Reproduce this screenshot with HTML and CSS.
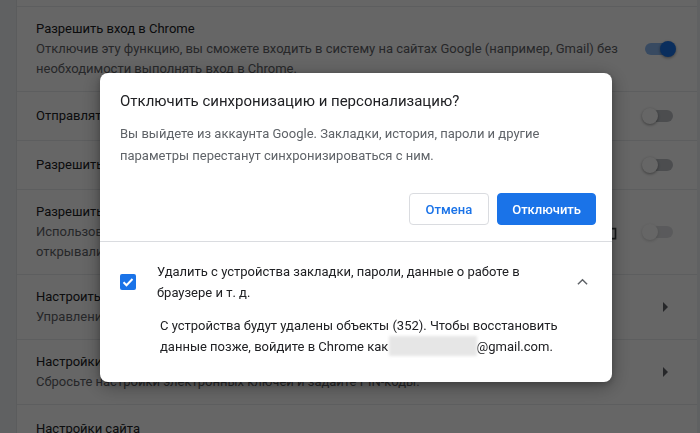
FILE: index.html
```html
<!DOCTYPE html>
<html lang="ru">
<head>
<meta charset="utf-8">
<title>Настройки</title>
<link rel="stylesheet" href="styles.css">
</head>
<body>
<div class="page">
  <div class="card">
    <div class="row row-top"></div>
    <div class="row">
      <div class="text">
        <div class="title">Разрешить вход в Chrome</div>
        <div class="sub">Отключив эту функцию, вы сможете входить в систему на сайтах Google (например, Gmail) без необходимости выполнять вход в Chrome.</div>
      </div>
      <div class="toggle on"><span class="knob"></span></div>
    </div>
    <div class="row">
      <div class="text">
        <div class="title">Отправлять запрос "Не отслеживать" с исходящим трафиком</div>
      </div>
      <div class="toggle"><span class="knob"></span></div>
    </div>
    <div class="row">
      <div class="text">
        <div class="title">Разрешить сайтам проверять, сохранены ли способы оплаты</div>
      </div>
      <div class="toggle"><span class="knob"></span></div>
    </div>
    <div class="row">
      <div class="text">
        <div class="title">Разрешить предзагрузку страниц</div>
        <div class="sub">Использовать файлы cookie, чтобы страницы быстрее</div>
        <div class="sub">открывались при просмотре и поиске.</div>
      </div>
      <svg class="policy" viewBox="0 0 24 24"><path d="M12 7V3H2v18h20V7H12zM6 19H4v-2h2v2zm0-4H4v-2h2v2zm0-4H4V9h2v2zm0-4H4V5h2v2zm4 12H8v-2h2v2zm0-4H8v-2h2v2zm0-4H8V9h2v2zm0-4H8V5h2v2zm10 12h-8v-2h2v-2h-2v-2h2v-2h-2V9h8v10z"/></svg>
      <div class="toggle disabled"><span class="knob"></span></div>
    </div>
    <div class="row">
      <div class="text">
        <div class="title">Настроить сертификаты</div>
        <div class="sub">Управление настройками и сертификатами HTTPS/SSL</div>
      </div>
      <span class="arrow"></span>
    </div>
    <div class="row">
      <div class="text">
        <div class="title">Настройки электронных ключей</div>
        <div class="sub">Сбросьте настройки электронных ключей и задайте PIN-коды.</div>
      </div>
      <span class="arrow"></span>
    </div>
    <div class="row">
      <div class="text">
        <div class="title">Настройки сайта</div>
      </div>
    </div>
  </div>
</div>

<div class="scrim"></div>

<div class="dialog">
  <div class="dlg-title">Отключить синхронизацию и персонализацию?</div>
  <div class="dlg-body">Вы выйдете из аккаунта Google. Закладки, история, пароли и другие параметры перестанут синхронизироваться с ним.</div>
  <div class="dlg-buttons">
    <button class="btn btn-cancel">Отмена</button>
    <button class="btn btn-action">Отключить</button>
  </div>
  <div class="dlg-footer">
    <div class="check-row">
      <span class="checkbox">
        <svg viewBox="0 0 16 16"><path d="M3.5 8.2l3 3 6-6.2" fill="none" stroke="#fff" stroke-width="2"/></svg>
      </span>
      <div class="check-label">Удалить с устройства закладки, пароли, данные о работе в браузере и т. д.</div>
      <svg class="chevron" viewBox="0 0 12 8"><path d="M1 6.5l5-5 5 5" fill="none" stroke="#5f6368" stroke-width="1.6"/></svg>
    </div>
    <div class="details">С устройства будут удалены объекты (352). Чтобы восстановить данные позже, войдите в Chrome как <span class="blurred"></span>@gmail.com.</div>
  </div>
</div>
</body>
</html>
```

FILE: styles.css
```css
* { box-sizing: border-box; }

html, body {
  margin: 0;
  padding: 0;
  width: 700px;
  height: 433px;
  overflow: hidden;
  background: #f1f3f4;
  font-family: Roboto, "Noto Sans", sans-serif;
  font-size: 13px;
  color: #202124;
}

.page {
  padding-left: 16px;
}

.card {
  width: 681px;
  background: #fff;
  border-left: 1px solid #e4e6e8;
}

.row {
  display: flex;
  align-items: center;
  min-height: 49px;
  padding: 12px 21px 12px 19px;
  border-bottom: 1px solid #e8eaed;
}

.row-top {
  min-height: 0;
  height: 7px;
  padding: 0;
}

.text {
  flex: 1;
  line-height: 20px;
  padding-right: 20px;
}

.title { color: #202124; }
.sub { color: #5f6368; }

.toggle {
  position: relative;
  width: 34px;
  height: 16px;
  flex: none;
}
.toggle::before {
  content: "";
  position: absolute;
  left: 3px;
  right: 3px;
  top: 2px;
  height: 12px;
  border-radius: 6px;
  background: #bdc1c6;
}
.knob {
  position: absolute;
  left: 0;
  top: 0;
  width: 16px;
  height: 16px;
  border-radius: 50%;
  background: #fff;
  box-shadow: 0 1px 3px rgba(0, 0, 0, 0.4);
}
.toggle.on::before { background: rgba(26, 115, 232, 0.5); }
.toggle.on .knob { left: 18px; background: #1a73e8; }
.toggle.disabled { opacity: 0.45; }

.policy {
  width: 20px;
  height: 20px;
  fill: #3c4043;
  margin-right: 24px;
  flex: none;
}

.arrow {
  width: 0;
  height: 0;
  border-top: 5px solid transparent;
  border-bottom: 5px solid transparent;
  border-left: 5px solid #5f6368;
  margin-right: 8px;
}

.scrim {
  position: fixed;
  inset: 0;
  background: rgba(0, 0, 0, 0.6);
}

.dialog {
  position: fixed;
  left: 100px;
  top: 73px;
  width: 512px;
  background: #fff;
  border-radius: 8px;
  box-shadow: 0 4px 20px rgba(0, 0, 0, 0.35), 0 2px 6px rgba(0, 0, 0, 0.2);
}

.dlg-title {
  padding: 16px 20px 0;
  font-size: 15px;
  line-height: 24px;
  color: #202124;
}

.dlg-body {
  padding: 10px 20px 0;
  line-height: 22px;
  color: #5f6368;
}

.dlg-buttons {
  display: flex;
  justify-content: flex-end;
  gap: 8px;
  padding: 26px 16px 16px;
  border-bottom: 1px solid #dadce0;
}

.btn {
  height: 32px;
  padding: 0 16px;
  border-radius: 4px;
  font-family: Roboto, "Noto Sans", sans-serif;
  font-size: 13px;
  font-weight: 500;
  cursor: pointer;
}
.btn-cancel {
  background: #fff;
  color: #1a73e8;
  border: 1px solid #dadce0;
}
.btn-action {
  padding: 0 14px;
  background: #1a73e8;
  color: #fff;
  border: 1px solid #1a73e8;
}

.dlg-footer {
  padding: 19px 20px 25px;
}

.check-row {
  display: flex;
  align-items: center;
}

.checkbox {
  width: 16px;
  height: 16px;
  border-radius: 2px;
  background: #1a73e8;
  flex: none;
  display: flex;
}
.checkbox svg { width: 16px; height: 16px; }

.check-label {
  flex: 1;
  margin-left: 21px;
  margin-right: 20px;
  line-height: 21px;
}

.chevron {
  width: 11px;
  height: 8px;
  margin-right: 4px;
  flex: none;
}

.details {
  margin: 12px 0 0 40px;
  line-height: 21px;
  color: #202124;
}

.blurred {
  display: inline-block;
  width: 88px;
  height: 20px;
  margin-left: -3px;
  vertical-align: -5px;
  background: #e6e6e6;
  filter: blur(1.5px);
}
```
